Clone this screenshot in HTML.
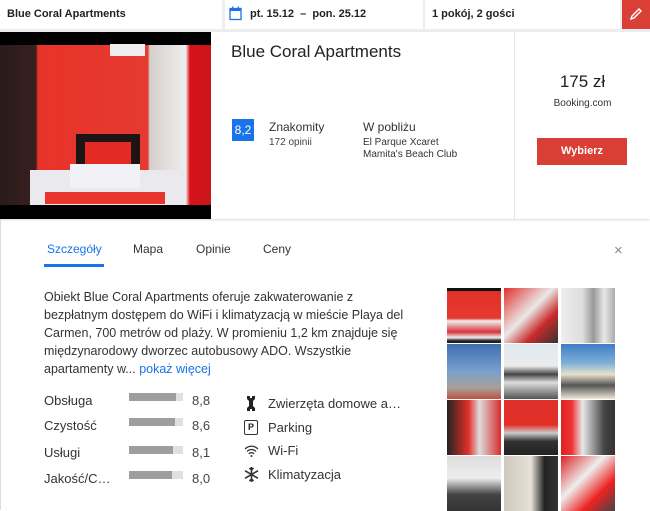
<!DOCTYPE html>
<html><head><meta charset="utf-8"><style>
*{margin:0;padding:0;box-sizing:border-box}
body{width:650px;height:510px;overflow:hidden;background:#fff;font-family:"Liberation Sans",Arial,sans-serif;color:#222;position:relative}
.abs{position:absolute}
.top{left:0;top:0;width:650px;height:32px;background:#eceef1}
.f{top:0;height:29px;background:#fff;font-size:11px;font-weight:bold;line-height:29px;color:#222}
.tab{top:242px;font-size:12px;color:#333}
.lbl{font-size:13px;color:#333;left:44px}
.bar{left:129px;width:54px;height:8px;background:#e0e0e0}
.bar i{display:block;height:8px;background:#9e9e9e}
.val{left:192px;font-size:13px;color:#444}
.am{left:268px;font-size:13px;color:#333}
.th{width:54px;height:55px}
</style></head><body>
<div class="abs top"></div>
<div class="abs f" style="left:0;width:222px;padding-left:7px">Blue Coral Apartments</div>
<div class="abs f" style="left:225px;width:198px;padding-left:25px">pt. 15.12 &nbsp;–&nbsp; pon. 25.12</div>
<svg class="abs" style="left:229px;top:6px" width="13" height="15" viewBox="0 0 13 15"><rect x="1" y="2.5" width="11" height="11" fill="none" stroke="#1a73e8" stroke-width="1.3"/><rect x="1" y="2.5" width="11" height="2.5" fill="#1a73e8"/><rect x="3" y="0.5" width="1.3" height="3" fill="#1a73e8"/><rect x="8.7" y="0.5" width="1.3" height="3" fill="#1a73e8"/></svg>
<div class="abs f" style="left:425px;width:195px;padding-left:7px;font-weight:bold">1 pokój, 2 gości</div>
<div class="abs" style="left:622px;top:0;width:28px;height:29px;background:#d93f34"></div>
<svg class="abs" style="left:627px;top:5px" width="18" height="18" viewBox="0 0 18 18"><path d="M4 14 L5 11 L12 4 L14 6 L7 13 Z" fill="none" stroke="#fff" stroke-width="1.4"/></svg>

<div class="abs" style="left:0;top:32px;width:650px;height:187px;background:#fff;box-shadow:0 1px 2px rgba(0,0,0,.15)"></div>
<div class="abs" style="left:0;top:32px;width:211px;height:187px;background:#000;overflow:hidden">
 <div class="abs" style="left:0;top:13px;width:211px;height:160px;background:linear-gradient(90deg,#2a1a1a 0,#3a2020 17%,#e8332a 18%,#e53a30 70%,#d6d0cc 71%,#eee 88%,#d8131a 90%,#c9151a 100%)"></div>
 <div class="abs" style="left:110px;top:12px;width:35px;height:12px;background:#eee"></div>
 <div class="abs" style="left:76px;top:102px;width:64px;height:50px;background:#1e1414"></div>
 <div class="abs" style="left:85px;top:110px;width:46px;height:32px;background:#e42a25"></div>
 <div class="abs" style="left:30px;top:138px;width:155px;height:35px;background:#e9e9ee"></div>
 <div class="abs" style="left:45px;top:160px;width:120px;height:12px;background:#e8362e"></div>
 <div class="abs" style="left:70px;top:132px;width:70px;height:24px;background:#f2f2f6"></div>
</div>
<div class="abs" style="left:514px;top:32px;width:1px;height:187px;background:#e6e6e6"></div>
<div class="abs" style="left:231px;top:42px;font-size:17px;color:#222">Blue Coral Apartments</div>
<div class="abs" style="left:232px;top:119px;width:22px;height:22px;background:#1a73e8;color:#fff;font-size:12px;line-height:22px;text-align:center">8,2</div>
<div class="abs" style="left:269px;top:120px;font-size:12px;color:#333">Znakomity</div>
<div class="abs" style="left:269px;top:137px;font-size:10px;color:#444">172 opinii</div>
<div class="abs" style="left:363px;top:120px;font-size:12px;color:#333">W pobliżu</div>
<div class="abs" style="left:363px;top:137px;font-size:10px;color:#333;line-height:12px">El Parque Xcaret<br>Mamita's Beach Club</div>
<div class="abs" style="left:515px;top:72px;width:135px;text-align:center;font-size:17px;color:#222">175 zł</div>
<div class="abs" style="left:515px;top:98px;width:135px;text-align:center;font-size:10px;color:#333">Booking.com</div>
<div class="abs" style="left:537px;top:138px;width:90px;height:27px;background:#d93f34;color:#fff;font-size:11px;font-weight:bold;line-height:27px;text-align:center">Wybierz</div>

<div class="abs" style="left:0;top:219px;width:1px;height:291px;background:#ddd"></div>
<div class="abs tab" style="left:47px;color:#1a73e8">Szczegóły</div>
<div class="abs" style="left:44px;top:264px;width:60px;height:3px;background:#1a73e8"></div>
<div class="abs tab" style="left:133px">Mapa</div>
<div class="abs tab" style="left:196px">Opinie</div>
<div class="abs tab" style="left:263px">Ceny</div>
<div class="abs" style="left:614px;top:242px;font-size:15px;color:#888">×</div>

<div class="abs" style="left:44px;top:288px;width:370px;font-size:12.5px;line-height:18px;color:#333">Obiekt Blue Coral Apartments oferuje zakwaterowanie z bezpłatnym dostępem do WiFi i klimatyzacją w mieście Playa del Carmen, 700 metrów od plaży. W promieniu 1,2 km znajduje się międzynarodowy dworzec autobusowy ADO. Wszystkie apartamenty w... <span style="color:#1a73e8">pokaż więcej</span></div>

<div class="abs lbl" style="top:393px">Obsługa</div><div class="abs bar" style="top:393px"><i style="width:47px"></i></div><div class="abs val" style="top:393px">8,8</div>
<div class="abs lbl" style="top:418px">Czystość</div><div class="abs bar" style="top:418px"><i style="width:46px"></i></div><div class="abs val" style="top:418px">8,6</div>
<div class="abs lbl" style="top:445px">Usługi</div><div class="abs bar" style="top:446px"><i style="width:44px"></i></div><div class="abs val" style="top:445px">8,1</div>
<div class="abs lbl" style="top:471px">Jakość/C…</div><div class="abs bar" style="top:471px"><i style="width:43px"></i></div><div class="abs val" style="top:471px">8,0</div>

<svg class="abs" style="left:245px;top:396px" width="12" height="15" viewBox="0 0 12 15"><path d="M2 0h3v2h2V0h3v3L8 5v5l2 2v3H7v-2H5v2H2v-3l2-2V5L2 3z" fill="#222"/></svg>
<div class="abs am" style="top:396px">Zwierzęta domowe a…</div>
<div class="abs" style="left:244px;top:420px;width:14px;height:15px;border:1.3px solid #333;border-radius:2px;font-size:9px;font-weight:bold;text-align:center;line-height:12px">P</div>
<div class="abs am" style="top:420px">Parking</div>
<svg class="abs" style="left:244px;top:445px" width="15" height="12" viewBox="0 0 15 12"><path d="M1 4a9 9 0 0 1 13 0M3 6.5a6 6 0 0 1 9 0M5 9a3 3 0 0 1 5 0" fill="none" stroke="#333" stroke-width="1.3"/><circle cx="7.5" cy="11" r="1" fill="#333"/></svg>
<div class="abs am" style="top:443px">Wi-Fi</div>
<svg class="abs" style="left:244px;top:467px" width="15" height="15" viewBox="0 0 15 15"><path d="M7.5 0v15M1 3.7l13 7.6M1 11.3l13-7.6M5.5 1l2 2 2-2M5.5 14l2-2 2 2" fill="none" stroke="#333" stroke-width="1.6"/></svg>
<div class="abs am" style="top:467px">Klimatyzacja</div>

<div class="abs th" style="left:447px;top:288px;background:linear-gradient(180deg,#111 0,#111 5%,#e23128 6%,#e5392f 55%,#eee 60%,#d9333b 80%,#f0f0f0 90%,#222 96%)"></div>
<div class="abs th" style="left:504px;top:288px;background:linear-gradient(135deg,#e22f29 0,#e9e9e9 45%,#c92a2a 70%,#333 100%)"></div>
<div class="abs th" style="left:561px;top:288px;background:linear-gradient(90deg,#eee 0,#ddd 40%,#999 60%,#e8e8e8 80%,#aaa 100%)"></div>
<div class="abs th" style="left:447px;top:344px;background:linear-gradient(180deg,#3d6fb0 0,#7aa0cc 50%,#a89f97 80%,#c05040 100%)"></div>
<div class="abs th" style="left:504px;top:344px;background:linear-gradient(180deg,#dfe8ee 0,#ececec 40%,#444 55%,#ddd 70%,#555 100%)"></div>
<div class="abs th" style="left:561px;top:344px;background:linear-gradient(180deg,#3f7ec7 0,#7fb0d6 35%,#e7e0cc 55%,#555 75%,#efe7d6 100%)"></div>
<div class="abs th" style="left:447px;top:400px;background:linear-gradient(90deg,#222 0,#e13029 40%,#ddd 60%,#d82c2c 100%)"></div>
<div class="abs th" style="left:504px;top:400px;background:linear-gradient(180deg,#e0302a 0,#e22f28 45%,#ccc 60%,#333 75%,#222 100%)"></div>
<div class="abs th" style="left:561px;top:400px;background:linear-gradient(90deg,#d22 0,#e33 20%,#e8e8e8 40%,#444 80%,#333 100%)"></div>
<div class="abs th" style="left:447px;top:456px;background:linear-gradient(180deg,#ddd 0,#eee 40%,#444 70%,#333 100%)"></div>
<div class="abs th" style="left:504px;top:456px;background:linear-gradient(90deg,#cfc8bd 0,#e6e0d8 50%,#222 75%,#333 100%)"></div>
<div class="abs th" style="left:561px;top:456px;background:linear-gradient(135deg,#d22 0,#eee 40%,#e22 70%,#444 100%)"></div>
</body></html>
